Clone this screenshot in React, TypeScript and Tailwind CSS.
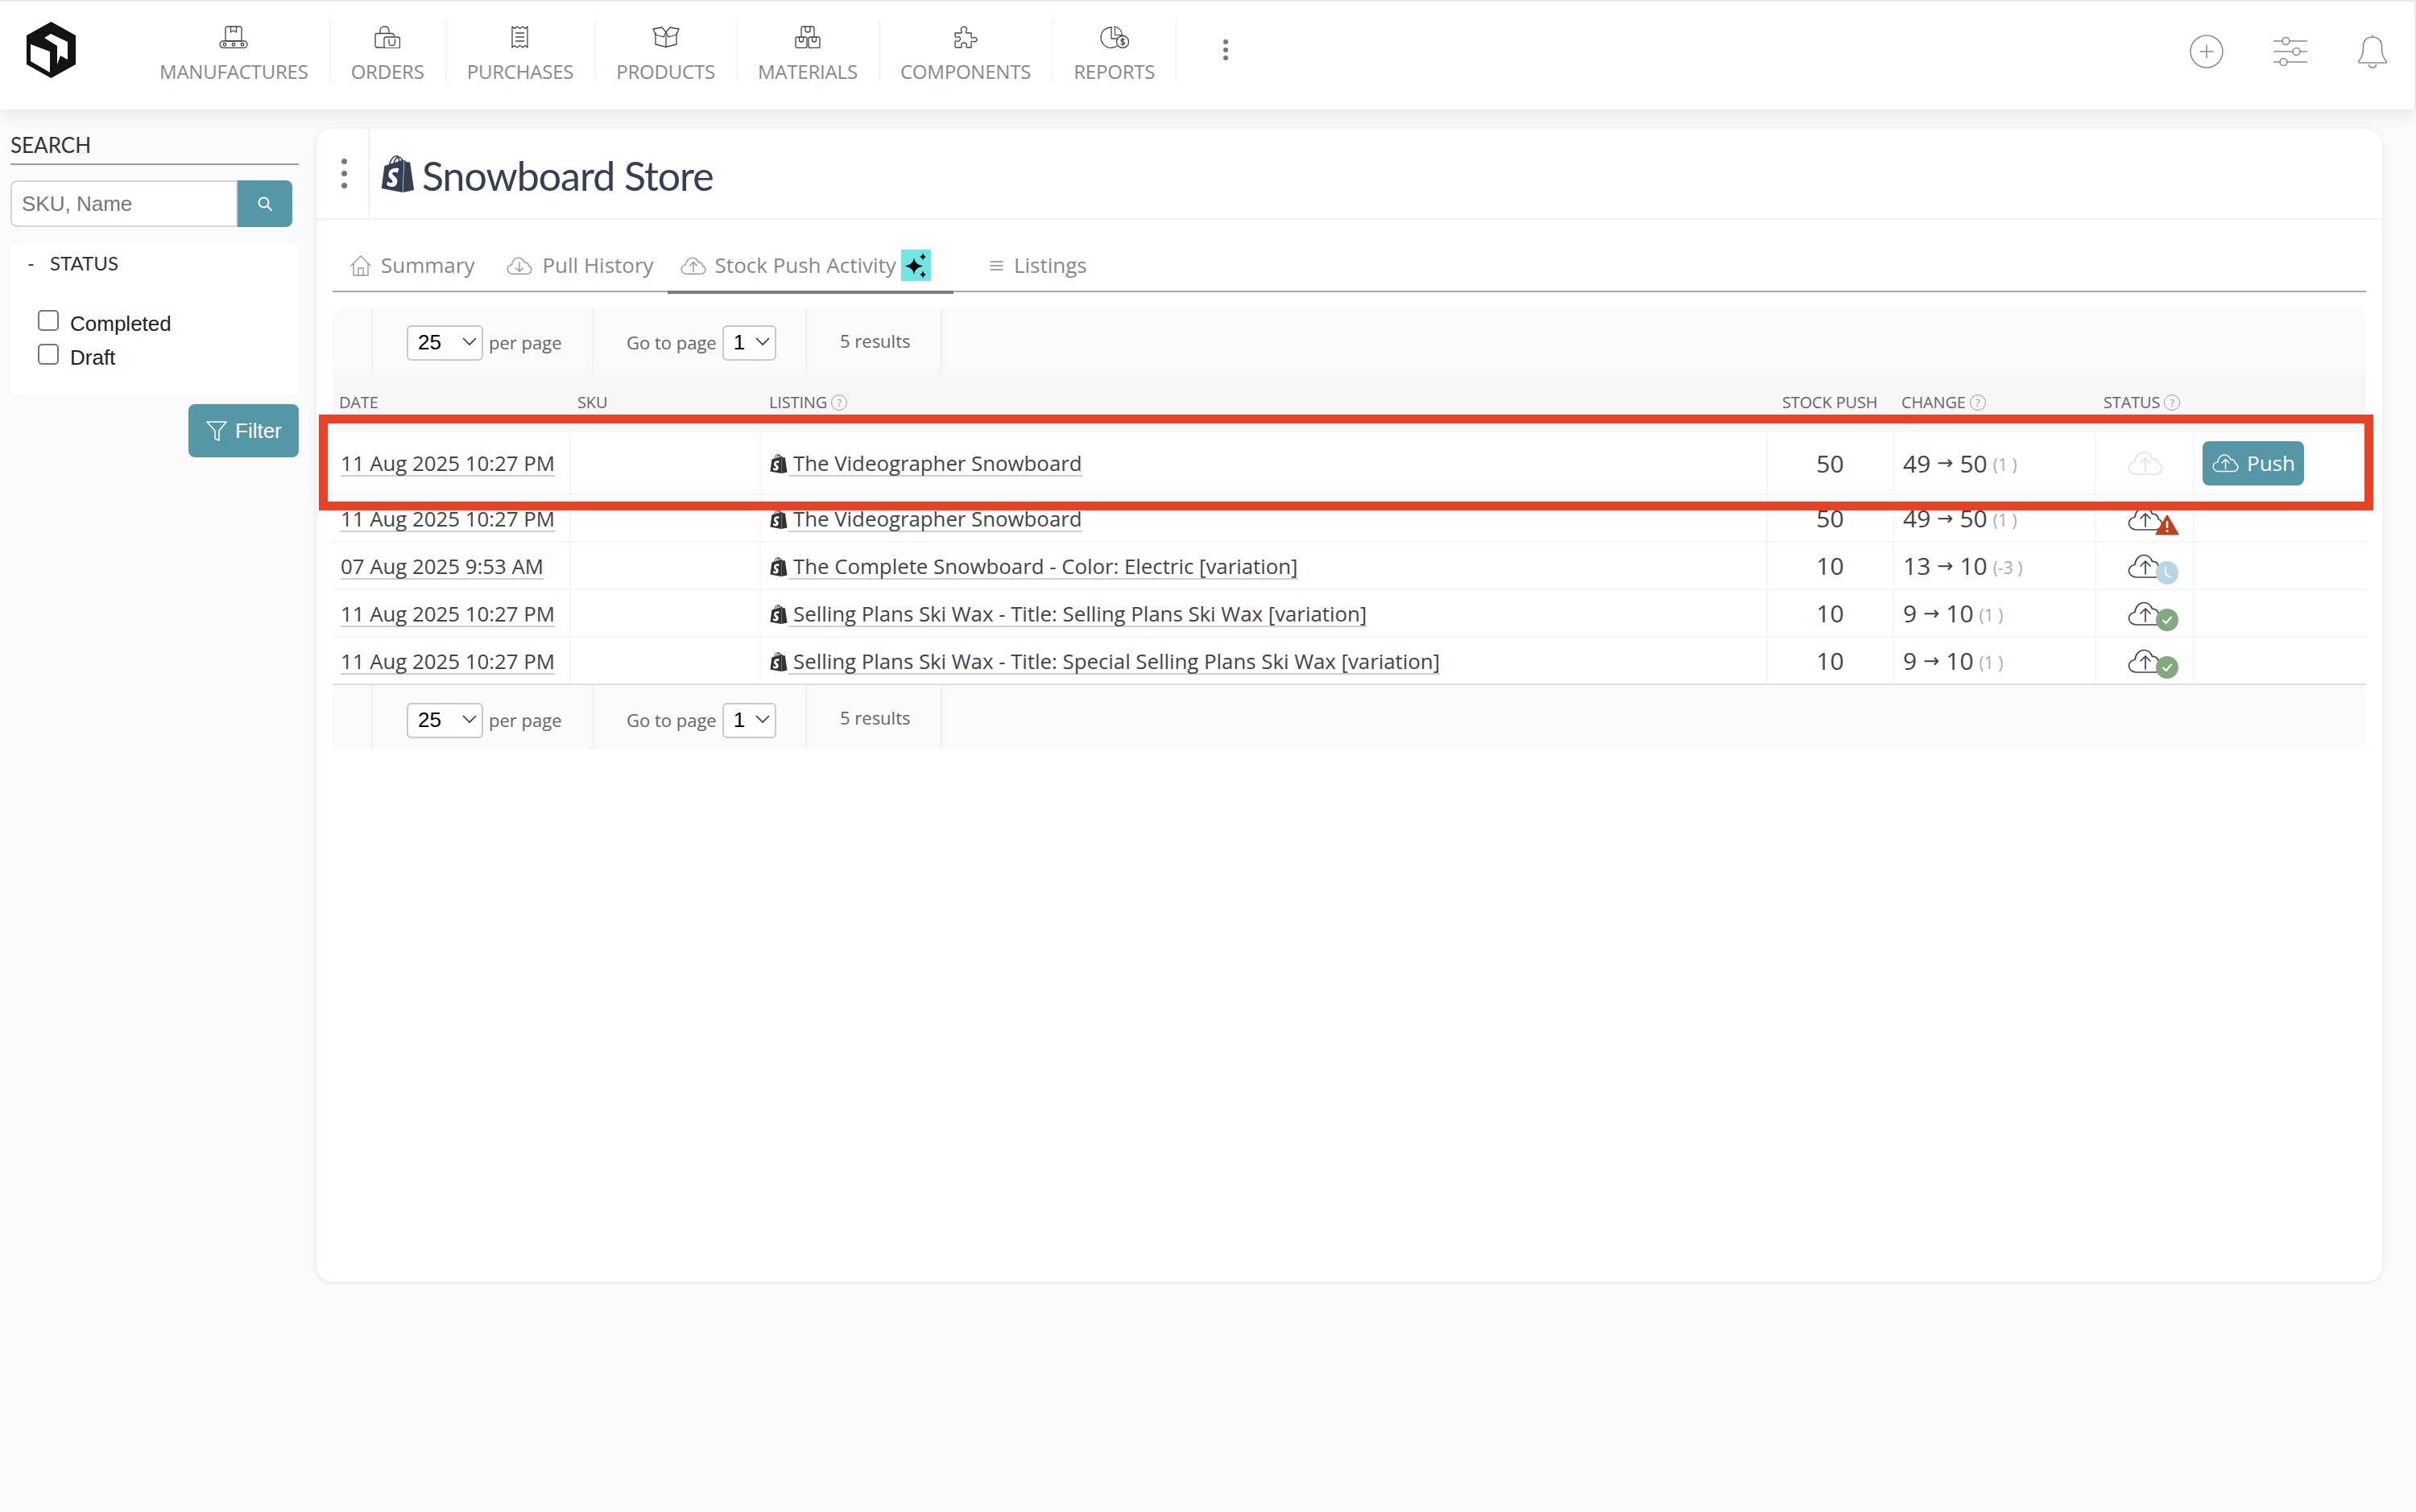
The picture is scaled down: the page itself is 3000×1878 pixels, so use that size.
import React from "react";
import { SiShopify } from "react-icons/si";

const gridCols = "grid grid-cols-[296px_236px_1250px_157px_251px_122px_213px]";
const cell = "h-full border-r-2 border-[#f6f6f9] flex items-center";

function Stroke({ w, h, vb, children, color = "#444", sw = 1.3 }: { w: number; h: number; vb: string; children: React.ReactNode; color?: string; sw?: number }) {
  return (
    <svg width={w} height={h} viewBox={vb} fill="none" stroke={color} strokeWidth={sw} strokeLinecap="round" strokeLinejoin="round">
      {children}
    </svg>
  );
}

const cloudPath = "M11 29C5.5 29 1.5 25.5 1.5 21C1.5 16.8 4.8 13.8 9 13.5C9.5 6.5 14.5 1.5 20 1.5C25.5 1.5 29 5 30.5 9.5C35 9 38 12 38 15.5C41 17 42.5 19.5 42.5 22C42.5 26 39 29 35 29Z";

function CloudUp({ w = 44, h = 30, color = "#444", sw = 1.7 }: { w?: number; h?: number; color?: string; sw?: number }) {
  return (
    <Stroke w={w} h={h} vb="0 0 44 30" color={color} sw={sw}>
      <path d={cloudPath} />
      <path d="M22 25V9M16 15L22 9L28 15" />
    </Stroke>
  );
}

function CloudDown({ w = 32, h = 22, color = "#999" }: { w?: number; h?: number; color?: string }) {
  return (
    <Stroke w={w} h={h} vb="0 0 44 30" color={color} sw={2}>
      <path d={cloudPath} />
      <path d="M22 9V25M16 19L22 25L28 19" />
    </Stroke>
  );
}

const navItems: { label: string; icon: React.ReactNode }[] = [
  {
    label: "MANUFACTURES",
    icon: (
      <Stroke w={36} h={28} vb="0 0 36 28">
        <rect x="8" y="1" width="20" height="18" rx="2" />
        <path d="M14.5 1V8L18 6L21.5 8V1" />
        <rect x="1" y="19" width="34" height="8.5" rx="4.2" />
        <circle cx="7" cy="23.3" r="1.8" />
        <circle cx="18" cy="23.3" r="1.8" />
        <circle cx="29" cy="23.3" r="1.8" />
      </Stroke>
    ),
  },
  {
    label: "ORDERS",
    icon: (
      <Stroke w={32} h={28} vb="0 0 32 28">
        <path d="M11 27H3.5C2 27 1 26 1 24.5V12C1 10.5 2 9.5 3.5 9.5H21C23 9.5 24.5 11 24.5 13" />
        <path d="M7 9.5V6C7 3 9 1 12.5 1C16 1 18 3 18 6V9.5" />
        <rect x="12" y="14" width="19.5" height="14" rx="2.5" />
        <path d="M18 17V21C18 23 19.5 24.5 21.8 24.5C24 24.5 25.5 23 25.5 21V17" />
      </Stroke>
    ),
  },
  {
    label: "PURCHASES",
    icon: (
      <Stroke w={21} h={28} vb="0 0 21 28">
        <path d="M1 1L4 3.5L7 1L10.500 3.500L14 1L17 3.500L20 1V27L17 24.500L14 27L10.500 24.500L7 27L4 24.500L1 27Z" />
        <path d="M5.500 9H15.500M5.500 14H15.500M5.500 19H15.500" />
      </Stroke>
    ),
  },
  {
    label: "PRODUCTS",
    icon: (
      <Stroke w={34} h={26} vb="0 0 34 26">
        <path d="M4 8V22L17 25.500L30 22V8" />
        <path d="M17 11V25.500" />
        <path d="M1 3L12 1L17 7L22 1L33 3L30 10L20 13L17 7L14 13L4 10Z" />
      </Stroke>
    ),
  },
  {
    label: "MATERIALS",
    icon: (
      <Stroke w={32} h={28} vb="0 0 32 28">
        <path d="M8 14V3C8 1.800 9 1 10.200 1H21.800C23 1 24 1.800 24 3V14" />
        <path d="M13 1V6C13 7 14 8 16 8C18 8 19 7 19 6V1" />
        <rect x="1" y="14" width="14" height="13.500" rx="2" />
        <rect x="17" y="14" width="14" height="13.500" rx="2" />
        <path d="M5.500 14V18C5.500 19 6.500 20 8 20C9.500 20 10.500 19 10.500 18V14" />
        <path d="M21.500 14V18C21.500 19 22.500 20 24 20C25.500 20 26.500 19 26.500 18V14" />
      </Stroke>
    ),
  },
  {
    label: "COMPONENTS",
    icon: (
      <Stroke w={29} h={28} vb="0 0 29 28">
        <path d="M1 9H8C9 9 9.500 8 9 7C8 5.500 8 3 9.500 2C11.500 0.500 15 1 15.500 3.500C15.800 5 15 6 14.500 7C14 8 14.500 9 15.500 9H21V14C21 15 22 15.500 23 15C25 14 27.500 14.500 28 16.500C28.500 19 25.500 20.500 23 19.500C22 19 21 19.500 21 20.500V27H16C15 27 14.500 26 15 25C15.800 23.500 15 21 12 21C9 21 8.200 23.500 9 25C9.500 26 9 27 8 27H2.500C1.500 27 1 26.500 1 25.500V20C1 19 2 18.500 3 19C5 20 7.500 18.500 7.500 16.500C7.500 14 5 13 3 14C2 14.500 1 14 1 13Z" />
      </Stroke>
    ),
  },
  {
    label: "REPORTS",
    icon: (
      <Stroke w={36} h={28} vb="0 0 36 28">
        <path d="M14 2C6.500 2 1 7.500 1 14.500C1 21.500 6.500 27.500 14 27.500C17 27.500 19 26.500 21 25" />
        <path d="M14 2V16H23" />
        <path d="M17.500 1C23 1.500 27 6 27.500 11.500H18.500V1Z" strokeWidth="1.200" />
        <circle cx="28" cy="20" r="7.500" fill="#fff" />
        <path d="M30 17.500C29.500 16.500 26 16.300 26 18.200C26 20.200 30.500 19.500 30.500 21.800C30.500 23.800 26.500 23.500 25.800 22.500M28 15.500V24.500" />
      </Stroke>
    ),
  },
];

function Select({ value, width }: { value: string; width: string }) {
  return (
    <span className={`relative inline-flex ${width} h-[44px]`}>
      <select
        defaultValue={value}
        className="appearance-none w-full h-full rounded-[6px] border-2 border-[#c9c9c9] bg-white pl-[12px] text-[26px] text-black font-['Liberation_Sans',sans-serif] outline-none"
      >
        <option value={value}>{value}</option>
      </select>
      <svg className="absolute right-[8px] top-[14px] pointer-events-none" width="18" height="12" viewBox="0 0 18 12" fill="none" stroke="#333" strokeWidth="1.600">
        <path d="M1 2L9 10L17 2" />
      </svg>
    </span>
  );
}

function Pagination({ className, shift }: { className: string; shift: string }) {
  return (
    <div className={`flex h-[80px] bg-[#fafafa] text-[#666] ${className}`}>
      <div className="w-[50px] border-r-2 border-[#f0f0f0]" />
      <div className={`w-[274px] border-r-2 border-[#f0f0f0] flex items-center pl-[42px] gap-[7px] ${shift}`}>
        <Select value="25" width="w-[95px]" />
        <span className="text-[22px]">per page</span>
      </div>
      <div className={`w-[265px] border-r-2 border-[#f0f0f0] flex items-center pl-[41px] gap-[7px] ${shift}`}>
        <span className="text-[22px]">Go to page</span>
        <Select value="1" width="w-[67px]" />
      </div>
      <div className="w-[168px] border-r-2 border-[#f0f0f0] flex items-center pl-[41px]">
        <span className="text-[22px]">5 results</span>
      </div>
    </div>
  );
}

function Help() {
  return (
    <span className="inline-flex items-center justify-center w-[20px] h-[20px] rounded-full border border-[#999] text-[13px] text-[#999] leading-none ml-[5px]">?</span>
  );
}

function Badge({ kind }: { kind: string }) {
  if (kind === "warn") {
    return (
      <svg className="absolute left-[34px] top-[10px]" width="30" height="26" viewBox="0 0 30 26">
        <path d="M15 1.500L28.500 24.500H1.500Z" fill="#c0401e" stroke="#c0401e" strokeWidth="2" strokeLinejoin="round" />
        <rect x="13.700" y="8" width="2.600" height="9" rx="1" fill="#fff" />
        <circle cx="15" cy="20.500" r="1.600" fill="#fff" />
      </svg>
    );
  }
  if (kind === "time") {
    return (
      <span className="absolute left-[35px] top-[9px] w-[28px] h-[29px] rounded-full bg-[#b5d7e5] flex items-center justify-center">
        <svg width="14" height="16" viewBox="0 0 14 16" fill="none" stroke="#fff" strokeWidth="2" strokeLinecap="round">
          <path d="M5 2V10L11 14" />
        </svg>
      </span>
    );
  }
  return (
    <span className="absolute left-[35px] top-[9px] w-[28px] h-[28px] rounded-full bg-[#82a97c] flex items-center justify-center">
      <svg width="14" height="12" viewBox="0 0 14 12" fill="none" stroke="#fff" strokeWidth="2" strokeLinecap="round" strokeLinejoin="round">
        <path d="M2 6.500L5.500 10L12 2.500" />
      </svg>
    </span>
  );
}

const rows = [
  { date: "11 Aug 2025 10:27 PM", listing: "The Videographer Snowboard", stock: "50", from: "49", to: "50", diff: "(1 )", status: "none", h: "h-[78px]" },
  { date: "11 Aug 2025 10:27 PM", listing: "The Videographer Snowboard", stock: "50", from: "49", to: "50", diff: "(1 )", status: "warn", h: "h-[59px]" },
  { date: "07 Aug 2025 9:53 AM", listing: "The Complete Snowboard - Color: Electric [variation]", stock: "10", from: "13", to: "10", diff: "(-3 )", status: "time", h: "h-[59px]" },
  { date: "11 Aug 2025 10:27 PM", listing: "Selling Plans Ski Wax - Title: Selling Plans Ski Wax [variation]", stock: "10", from: "9", to: "10", diff: "(1 )", status: "ok", h: "h-[59px]" },
  { date: "11 Aug 2025 10:27 PM", listing: "Selling Plans Ski Wax - Title: Special Selling Plans Ski Wax [variation]", stock: "10", from: "9", to: "10", diff: "(1 )", status: "ok", h: "h-[59px]" },
];

export default function App() {
  return (
    <div className="relative min-h-[1878px] bg-[#fafafa] font-['Open_Sans',sans-serif] overflow-hidden">
      <header className="relative z-10 h-[136px] bg-white border-t-2 border-r-2 border-[#e8e8ee] shadow-[0_4px_18px_rgba(40,40,60,0.10)] flex items-start pt-[21px]">
        <div className="w-[173px] h-[79px] pl-[33px] pt-[4px] shrink-0">
          <svg width="61" height="70" viewBox="0 0 61 70">
            <path d="M30.500 0L61 17V53L30.500 70L0 53V17Z" fill="#111413" />
            <path d="M5 28L29 37V63L5 49Z" fill="#fff" />
            <path d="M22 20L30 15L51 25V47L42 42L38 53V30Z" fill="#fff" />
          </svg>
        </div>
        <nav className="flex">
          {navItems.map((n) => (
            <div key={n.label} className="h-[79px] pl-[25px] pr-[26px] border-r-2 border-[#f5f5f5] flex flex-col items-center pt-[9px]">
              <div className="h-[28px] shrink-0 flex items-center justify-center">{n.icon}</div>
              <span className="mt-[13px] shrink-0 text-[24px] leading-[32px] text-[#888] tracking-[-0.2px]">{n.label}</span>
            </div>
          ))}
        </nav>
        <div className="ml-[57px] mt-[26px] flex flex-col gap-[4px]">
          <span className="w-[6px] h-[6px] rounded-full bg-[#777]" />
          <span className="w-[6px] h-[6px] rounded-full bg-[#777]" />
          <span className="w-[6px] h-[6px] rounded-full bg-[#777]" />
        </div>
        <div className="ml-auto flex items-center gap-[62px] pr-[33px] mt-[20px] h-[42px]">
          <Stroke w={42} h={42} vb="0 0 42 42" color="#8a8a8a" sw={1.500}>
            <circle cx="21" cy="21" r="20" />
            <path d="M21 13V29M13 21H29" />
          </Stroke>
          <Stroke w={42} h={36} vb="0 0 42 36" color="#8a8a8a" sw={1.600}>
            <path d="M0 5H11M20 5H42M0 18H24M33 18H42M0 31H8M17 31H42" />
            <circle cx="15.500" cy="5" r="4.500" />
            <circle cx="28.500" cy="18" r="4.500" />
            <circle cx="12.500" cy="31" r="4.500" />
          </Stroke>
          <Stroke w={38} h={42} vb="0 0 38 42" color="#8a8a8a" sw={1.600}>
            <path d="M19 1V3M19 3C11.500 3 7.500 8 7.500 15C7.500 24 6.500 27 2 33C1 34.500 1.500 35 3 35H35C36.500 35 37 34.500 36 33C31.500 27 30.500 24 30.500 15C30.500 8 26.500 3 19 3Z" />
            <path d="M14.500 37.500C15 40 17 41 19 41C21 41 23 40 23.500 37.500" />
          </Stroke>
        </div>
      </header>

      <div className="flex pt-[24px] pr-[42px]">
        <aside className="w-[393px] shrink-0 pl-[13px] pr-[22px]">
          <div className="mt-[2px] pb-[5px] border-b-2 border-[#999] font-['Lato',sans-serif] text-[26px] leading-[36px] text-[#333]">SEARCH</div>
          <div className="mt-[19px] flex w-[350px] h-[58px]">
            <input
              placeholder="SKU, Name"
              className="w-[282px] h-full rounded-l-[8px] border-2 border-[#d5d5d5] bg-white pl-[12px] text-[26px] font-['Liberation_Sans',sans-serif] placeholder:text-[#777] outline-none"
            />
            <button className="w-[68px] h-full rounded-r-[8px] bg-[#5597a6] flex items-center justify-center">
              <Stroke w={18} h={18} vb="0 0 18 18" color="#fff" sw={2}>
                <circle cx="7.500" cy="7.500" r="6" />
                <path d="M12 12L17 17" />
              </Stroke>
            </button>
          </div>
          <div className="mt-[20px] h-[188px] bg-white rounded-[6px]">
            <div className="h-[50px] flex items-center pl-[21px] font-['Lato',sans-serif] text-[24px] text-[#333]">
              <span className="w-[28px]">-</span>
              <span>STATUS</span>
            </div>
            <div className="mt-[33px] pl-[34px] flex flex-col gap-[16px] font-['Liberation_Sans',sans-serif] text-[26px] text-[#222]">
              {["Completed", "Draft"].map((t) => (
                <label key={t} className="flex items-start gap-[14px] h-[26px]">
                  <input type="checkbox" className="appearance-none w-[26px] h-[26px] border-2 border-[#767676] rounded-[5px] bg-white" />
                  <span className="pt-[4px] leading-[26px]">{t}</span>
                </label>
              ))}
            </div>
          </div>
          <div className="mt-[12px] flex justify-end">
            <button className="w-[137px] h-[66px] rounded-[8px] bg-[#5597a6] text-white flex items-center pl-[22px] gap-[10px] font-['Liberation_Sans',sans-serif] text-[26px]">
              <Stroke w={26} h={25} vb="0 0 26 25" color="#fff" sw={1.500}>
                <path d="M1 1H25L16 12V24L11 22V12Z" />
              </Stroke>
              Filter
            </button>
          </div>
        </aside>

        <main className="flex-1 h-[1432px] bg-white rounded-[20px] shadow-[0_1px_6px_rgba(0,0,0,0.10)]">
          <div className="h-[113px] border-b-2 border-[#f0f0f0] flex">
            <div className="w-[66px] border-r-2 border-[#f0f0f0] flex flex-col items-center justify-center gap-[8px] pl-[5px]">
              <span className="w-[7px] h-[7px] rounded-full bg-[#777]" />
              <span className="w-[7px] h-[7px] rounded-full bg-[#777]" />
              <span className="w-[7px] h-[7px] rounded-full bg-[#777]" />
            </div>
            <div className="flex items-center pl-[12px] gap-[7px] text-[#364055]">
              <SiShopify className="w-[46px] h-[46px]" />
              <span className="mt-[5px] font-['Lato',sans-serif] text-[50px] tracking-[-1px] leading-none">Snowboard Store</span>
            </div>
          </div>

          <div className="px-[20px]">
            <div className="pt-[37px] border-b-2 border-[#a9a9a3] flex text-[26px] text-[#888]">
              <div className="h-[55px] -mb-[4px] pb-[12px] border-b-4 border-transparent pl-[22px] pr-[24px] flex items-center gap-[12px]">
                <Stroke w={26} h={26} vb="0 0 26 26" color="#999" sw={1.400}>
                  <path d="M1 13L13 1L25 13M4 10V25H22V10" />
                  <path d="M10 25V16H16V25" />
                </Stroke>
                Summary
              </div>
              <div className="h-[55px] -mb-[4px] pb-[12px] border-b-4 border-transparent pl-[16px] pr-[17px] flex items-center gap-[12px]">
                <CloudDown />
                Pull History
              </div>
              <div className="h-[55px] -mb-[4px] pb-[12px] border-b-4 border-[#7f7d75] pl-[16px] pr-[28px] flex items-center">
                <CloudUp w={32} h={22} color="#999" sw={2} />
                <span className="ml-[11px]">Stock Push Activity</span>
                <span className="ml-[6px] w-[37px] h-[39px] bg-[#6ee7e3] flex items-center justify-center">
                  <svg width="28" height="32" viewBox="0 0 28 32" fill="#000">
                    <path d="M12 6C13 12 15 14 23 16.500C15 19 13 21 12 27C11 21 9 19 1 16.500C9 14 11 12 12 6Z" />
                    <path d="M23 0C23.500 3 24.500 4 27 5C24.500 6 23.500 7 23 10C22.500 7 21.500 6 19 5C21.500 4 22.500 3 23 0Z" />
                    <path d="M23 22C23.500 25 24.500 26 27 27C24.500 28 23.500 29 23 32C22.500 29 21.500 28 19 27C21.500 26 22.500 25 23 22Z" />
                  </svg>
                </span>
              </div>
              <div className="h-[55px] -mb-[4px] pb-[12px] border-b-4 border-transparent pl-[45px] flex items-center gap-[13px]">
                <Stroke w={17} h={14} vb="0 0 17 14" color="#888" sw={1.500}>
                  <path d="M1 2H16M1 7H16M1 12H16" />
                </Stroke>
                Listings
              </div>
            </div>

            <Pagination className="mt-[20px] rounded-t-[14px]" shift="pt-[5px]" />

            <div className="h-[74px] bg-[#f7f7f7] pt-[25px] text-[20px] leading-[24px] text-[#666] tracking-[-0.15px]">
              <div className={gridCols}>
                <div className="pl-[8px]">DATE</div>
                <div className="pl-[8px]">SKU</div>
                <div className="pl-[10px] flex items-center">LISTING<Help /></div>
                <div className="pl-[18px] whitespace-nowrap">STOCK PUSH</div>
                <div className="pl-[9px] flex items-center">CHANGE<Help /></div>
                <div className="pl-[9px] flex items-center">STATUS<Help /></div>
                <div />
              </div>
            </div>

            {rows.map((r, i) => (
              <div key={i} className={`${gridCols} ${r.h} ${i === 4 ? "border-b-2 border-[#dedede]" : "border-b-2 border-[#f6f6f9]"} text-[25.800px] text-[#444]`}>
                <div className={`${cell} pl-[10px] pt-[2px]`}>
                  <span className="border-b-2 border-[#c9d0d6] leading-[30px] whitespace-nowrap">{r.date}</span>
                </div>
                <div className={cell} />
                <div className={`${cell} pl-[10px] pt-[2px]`}>
                  <SiShopify className="w-[24px] h-[24px] text-[#333]" />
                  <span className="border-b-2 border-[#c9d0d6] pl-[6px] leading-[30px] whitespace-nowrap">{r.listing}</span>
                </div>
                <div className={`${cell} justify-center text-[30px]`}>{r.stock}</div>
                <div className={`${cell} pl-[11px] text-[30px] whitespace-nowrap`}>
                  {r.from}
                  <span className="text-[24px] mx-[8px] font-['DejaVu_Sans',sans-serif]">→</span>
                  {r.to}
                  <span className="ml-[7px] mt-[6px] text-[21px] text-[#aaa]">{r.diff}</span>
                </div>
                <div className={`${cell} pl-[39px]`}>
                  <div className="relative w-[44px] h-[30px]">
                    <CloudUp color={r.status === "none" ? "#e2e2e2" : "#444"} />
                    {r.status !== "none" && <Badge kind={r.status} />}
                  </div>
                </div>
                <div className="h-full flex items-center pl-[10px]">
                  {i === 0 && (
                    <button className="w-[126px] h-[55px] rounded-[8px] bg-[#5597a6] text-white flex items-center pl-[12px] gap-[10px] text-[26px]">
                      <CloudUp w={33} h={24} color="#fff" sw={2} />
                      Push
                    </button>
                  )}
                </div>
              </div>
            ))}

            <Pagination className="rounded-b-[4px]" shift="pt-[7px]" />
          </div>
        </main>
      </div>

      <div className="absolute left-[396px] top-[515px] w-[2551px] h-[119px] border-[11px] border-[#ed4125] pointer-events-none" />
    </div>
  );
}
